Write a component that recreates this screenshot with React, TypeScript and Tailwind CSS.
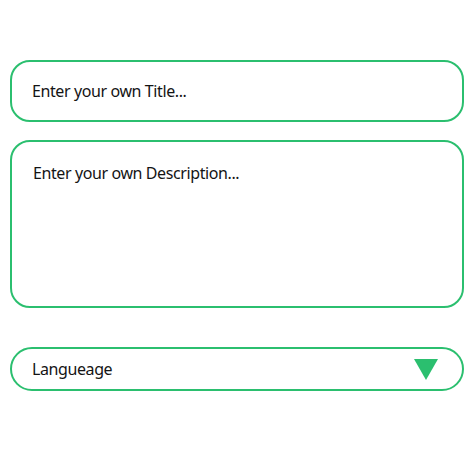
export default function App() {
  return (
    <div className="w-[474px] h-[474px] bg-white font-['Noto_Sans',sans-serif] text-[#141414] tracking-[-0.4px]">
      <div className="flex flex-col px-[10px] pt-[60px]">
        <div className="flex h-[62px] items-center rounded-[20px] border-2 border-[#2bbf6f] px-5 text-base">
          Enter your own Title...
        </div>
        <div className="mt-[18px] h-[168px] rounded-[20px] border-2 border-[#2bbf6f] px-[21px] pt-[19px] text-base">
          Enter your own Description...
        </div>
        <div className="mt-[39px] flex h-[44px] items-center justify-between rounded-full border-2 border-[#2bbf6f] pl-5 pr-[24px] text-base">
          <span>Langueage</span>
          <svg width="24" height="21" viewBox="0 0 24 21">
            <polygon points="0,0 24,0 12,21" fill="#2bbf6f" />
          </svg>
        </div>
      </div>
    </div>
  );
}
